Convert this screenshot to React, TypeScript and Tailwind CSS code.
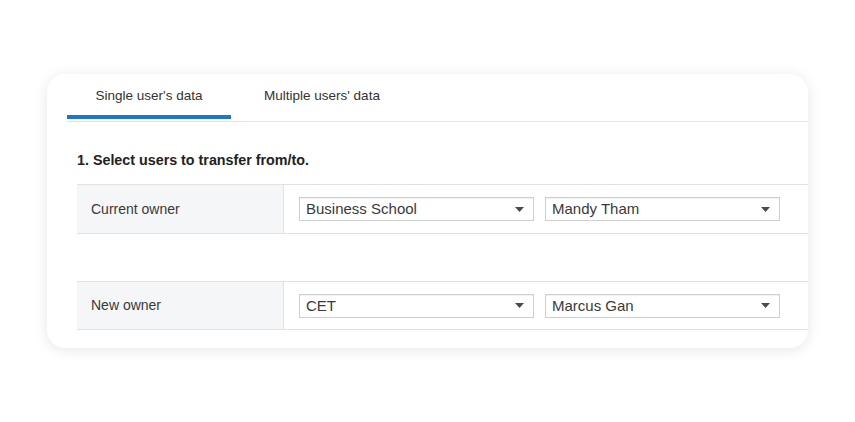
import React from 'react';

const Caret: React.FC = () => (
  <svg width="9" height="5" viewBox="0 0 9 5" className="shrink-0">
    <path d="M0 0 H9 L4.5 5 Z" fill="#4a4a4a" />
  </svg>
);

const Select: React.FC<{ value: string }> = ({ value }) => (
  <div className="flex h-[24px] w-[235px] items-center justify-between border border-[#cfcfcf] bg-white pl-[6px] pr-[9px] text-[15px] text-[#3a3a3a] shadow-[inset_0_1px_1px_rgba(0,0,0,0.06)]">
    <span>{value}</span>
    <Caret />
  </div>
);

const Row: React.FC<{ label: string; left: string; right: string; tall?: boolean }> = ({ label, left, right, tall }) => (
  <div className={`flex border-b border-[#e2e2e2] ${tall ? 'h-[49px]' : 'h-[48px]'}`}>
    <div className="flex w-[207px] shrink-0 items-center border-r border-[#e2e2e2] bg-[#f5f6f8] pl-[14px] text-[14px] text-[#3a3a3a]">
      {label}
    </div>
    <div className="flex items-center gap-[11px] pl-[15px]">
      <Select value={left} />
      <Select value={right} />
    </div>
  </div>
);

export default function App() {
  return (
    <div
      className="min-h-[422px] w-[855px] bg-white pl-[47px] pt-[74px]"
      style={{ fontFamily: '"Liberation Sans", Arial, sans-serif' }}
    >
      <div className="h-[274px] w-[761px] overflow-hidden rounded-[18px] bg-white shadow-[0_2px_14px_rgba(0,0,0,0.10)]">
        <div className="pl-[20px]">
          {/* tabs */}
          <div className="flex h-[48px] border-b border-[#e3e3e3]">
            <div className="flex w-[164px] flex-col">
              <div className="flex flex-1 items-center justify-center pt-[4px] text-[13.5px] text-[#333]">
                Single user's data
              </div>
              <div className="mb-[2px] h-[4px] bg-[#1c74d4]" />
            </div>
            <div className="flex items-center pb-[3px] pl-[33px] text-[13.5px] text-[#333]">
              Multiple users' data
            </div>
          </div>

          <div className="pl-[10px]">
            <div className="pt-[28px] text-[14.3px] font-bold text-[#222]">1. Select users to transfer from/to.</div>
            <div className="mt-[13px] border-t border-[#e2e2e2]">
              <Row label="Current owner" left="Business School" right="Mandy Tham" tall />
              <div className="h-[48px] border-b border-[#e2e2e2]" />
              <Row label="New owner" left="CET" right="Marcus Gan" />
            </div>
          </div>
        </div>
      </div>
    </div>
  );
}
